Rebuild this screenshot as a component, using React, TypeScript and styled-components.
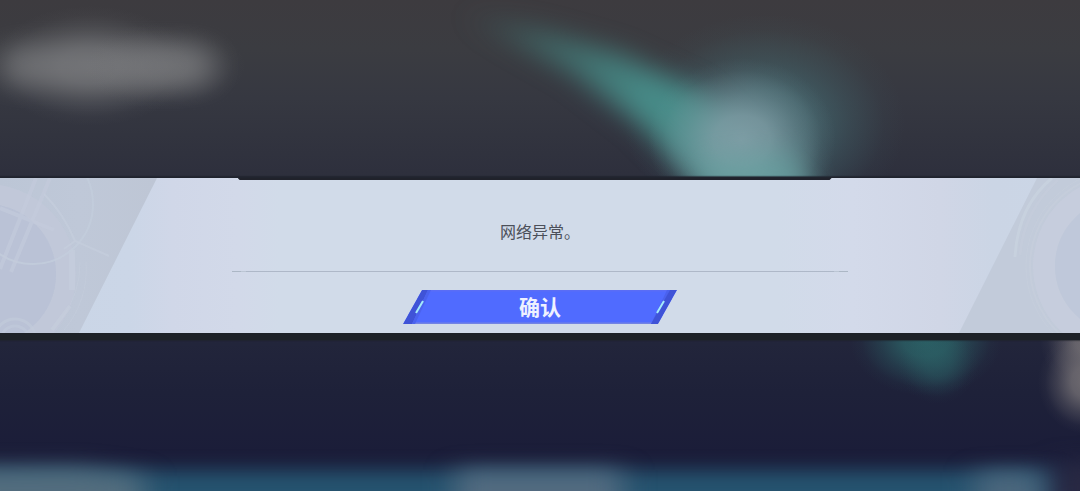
import React from "react";
import styled, { createGlobalStyle } from "styled-components";

const GlobalStyle = createGlobalStyle`
  *, *::before, *::after { box-sizing: border-box; }
  body {
    margin: 0;
    background: #1e2139;
    font-family: "Noto Sans CJK SC", "Noto Sans", sans-serif;
  }
`;

const Screen = styled.main`
  position: relative;
  min-height: 100vh;
  display: flex;
  flex-direction: column;
  justify-content: center;
  padding-top: 26px;
  overflow: hidden;
`;

const Scene = styled.svg`
  position: absolute;
  inset: 0;
  width: 100%;
  height: 100%;
`;

const Dialog = styled.section`
  position: relative;
  width: 100%;
  border-top: 1px solid #20242e;
  border-bottom: 7px solid #1d2127;
  box-shadow: 0 -1px 1px rgba(28, 32, 42, 0.6), 0 1px 1px rgba(29, 33, 39, 0.5);
  background: linear-gradient(
    90deg,
    #c9d5e6 0%,
    #cbd6e7 12%,
    #d0d7e8 16%,
    #d2d9e9 22%,
    #d1dbe9 26%,
    #d1dbe9 72%,
    #d3daea 79%,
    #d0d6e6 87%,
    #cbd5e5 92%,
    #cbd6e6 100%
  );
`;

const Emblem = styled.svg<{ $side: "left" | "right" }>`
  position: absolute;
  top: 0;
  bottom: 0;
  ${(p) => p.$side}: 0;
  height: 100%;
`;

const Notch = styled.div`
  position: relative;
  height: 2px;
  margin: 0 23% 0 22%;
  background: #20222b;
  clip-path: polygon(0 0, 100% 0, calc(100% - 2px) 100%, 2px 100%);
`;

const Content = styled.div`
  position: relative;
  display: flex;
  flex-direction: column;
  align-items: center;
  width: 57%;
  margin: 0 auto;
  padding: 39px 0 9px;
`;

const Message = styled.p`
  margin: 0;
  font-size: 16px;
  line-height: 24px;
  color: #4b4f59;
`;

const Divider = styled.hr`
  width: 100%;
  height: 1px;
  margin: 28px 0 18px;
  border: 0;
  background: linear-gradient(
    90deg,
    #acb7c5 0 9px,
    #bcc6d4 9px 14px,
    #aeb8c8 14px calc(100% - 14px),
    #bcc6d4 calc(100% - 14px) calc(100% - 9px),
    #acb7c5 calc(100% - 9px)
  );
`;

const ConfirmButton = styled.button`
  display: flex;
  align-items: center;
  justify-content: space-between;
  width: 274px;
  height: 34px;
  padding: 0;
  border: 0;
  cursor: pointer;
  color: #eef1ff;
  font-family: inherit;
  font-size: 21px;
  font-weight: 700;
  line-height: 32px;
  background: linear-gradient(#5a6df6 0 1px, #506bff 2px 32px, #7283e4 33px);
  clip-path: polygon(19px 0, 100% 0, calc(100% - 19px) 100%, 0 100%);
`;

const ButtonLabel = styled.span`
  height: 34px;
`;

const EdgeMark = styled.svg`
  display: block;
  width: 30px;
  height: 34px;
`;

function SoftFilter({ id, amount }: { id: string; amount: string }) {
  return (
    <filter id={id} x="-100%" y="-100%" width="300%" height="300%" colorInterpolationFilters="sRGB">
      <feGaussianBlur stdDeviation={amount} />
    </filter>
  );
}

function Glow({ id, color, strength }: { id: string; color: string; strength: number }) {
  return (
    <radialGradient id={id}>
      <stop offset="0" stopColor={color} stopOpacity={strength} />
      <stop offset="0.3" stopColor={color} stopOpacity={strength * 0.85} />
      <stop offset="0.6" stopColor={color} stopOpacity={strength * 0.4} />
      <stop offset="0.85" stopColor={color} stopOpacity={strength * 0.08} />
      <stop offset="1" stopColor={color} stopOpacity="0" />
    </radialGradient>
  );
}

function Backdrop() {
  return (
    <Scene viewBox="0 0 1080 491" preserveAspectRatio="none" aria-hidden="true">
      <defs>
        <linearGradient id="sky" x1="0" y1="0" x2="0" y2="1">
          <stop offset="0" stopColor="#3d3b3f" />
          <stop offset="0.1" stopColor="#3b3c41" />
          <stop offset="0.2" stopColor="#363841" />
          <stop offset="0.35" stopColor="#2e303d" />
          <stop offset="0.7" stopColor="#22253b" />
          <stop offset="0.8" stopColor="#1e2139" />
          <stop offset="0.92" stopColor="#1b1d39" />
          <stop offset="1" stopColor="#1b2140" />
        </linearGradient>
        <linearGradient id="beam" gradientUnits="userSpaceOnUse" x1="470" y1="15" x2="700" y2="140">
          <stop offset="0" stopColor="#458c87" stopOpacity="0.1" />
          <stop offset="0.35" stopColor="#458c87" stopOpacity="0.55" />
          <stop offset="0.75" stopColor="#488f8b" stopOpacity="0.95" />
        </linearGradient>
        <Glow id="halo" color="#47747a" strength={0.75} />
        <Glow id="core" color="#809ea6" strength={0.95} />
        <Glow id="smoke" color="#7a7b7e" strength={0.9} />
        <Glow id="teal" color="#2c6468" strength={0.9} />
        <Glow id="edge" color="#726e73" strength={0.95} />
        <SoftFilter id="softSmoke" amount="15 12" />
        <SoftFilter id="softBeam" amount="13" />
        <SoftFilter id="softBand" amount="14 9" />
        <SoftFilter id="softFlat" amount="15 11" />
      </defs>
      <rect width="1080" height="491" fill="url(#sky)" />

      <rect x="0" y="46" width="212" height="40" rx="16" fill="#747578" opacity="0.8" filter="url(#softSmoke)" />
      <ellipse cx="90" cy="66" rx="100" ry="60" fill="url(#smoke)" opacity="0.7" />
      <ellipse cx="165" cy="66" rx="80" ry="44" fill="url(#smoke)" opacity="0.5" />

      <ellipse cx="765" cy="124" rx="140" ry="110" fill="url(#halo)" />
      <path
        d="M460 14 L540 30 L620 54 L700 92 L810 200 L715 200 L640 124 L570 72Z"
        fill="url(#beam)"
        filter="url(#softBeam)"
      />
      <ellipse cx="742" cy="140" rx="94" ry="82" fill="url(#core)" />
      <path d="M700 160 L800 150 L820 204 L720 204Z" fill="#6ba1a2" opacity="0.7" filter="url(#softBeam)" />

      <ellipse cx="926" cy="340" rx="76" ry="56" fill="url(#teal)" />
      <ellipse cx="938" cy="364" rx="40" ry="40" fill="url(#teal)" opacity="0.5" />
      <ellipse cx="1090" cy="340" rx="50" ry="50" fill="url(#edge)" />
      <ellipse cx="1086" cy="382" rx="48" ry="52" fill="url(#edge)" />

      <g filter="url(#softBand)">
        <rect x="-60" y="471" width="1112" height="80" fill="#25536f" />
      </g>
      <g filter="url(#softFlat)">
        <path d="M-60 469 L80 468 L144 476 L144 560 L-60 560Z" fill="#536d7e" />
        <rect x="456" y="470" width="166" height="90" fill="#536b80" />
        <rect x="976" y="472" width="66" height="90" fill="#4c677d" />
        <rect x="1058" y="462" width="80" height="90" fill="#292943" />
      </g>
    </Scene>
  );
}

function LeftEmblem() {
  return (
    <Emblem $side="left" width="157" height="155" viewBox="0 0 157 155" aria-hidden="true">
      <defs>
        <clipPath id="leftSlant">
          <path d="M0 0H157L79 155H0Z" />
        </clipPath>
        <linearGradient id="leftTone" x1="0" y1="0" x2="1" y2="0">
          <stop offset="0" stopColor="#bcc6d6" />
          <stop offset="0.5" stopColor="#bfc8d8" />
          <stop offset="1" stopColor="#bec6d5" />
        </linearGradient>
      </defs>
      <g clipPath="url(#leftSlant)" fill="none">
        <rect width="157" height="155" fill="url(#leftTone)" />
        <circle cx="-14" cy="96" r="80" stroke="#c2c8da" strokeWidth="20" opacity="0.8" />
        <circle cx="-14" cy="96" r="70" fill="#b9c1d6" opacity="0.9" />
        <path d="M80 84 A93 93 0 0 1 62 140M86 84 A93 93 0 0 1 64 152" stroke="#c4cddc" strokeWidth="1" opacity="0.6" />
        <path d="M72 72V112" stroke="#c7cfde" strokeWidth="6" opacity="0.6" />
        <path d="M70 128L52 152" stroke="#c7cfde" strokeWidth="4" opacity="0.5" />
        <circle cx="33" cy="26" r="60" stroke="#c3cddc" strokeWidth="2" opacity="0.8" />
        <path d="M0 30L54 52M36 0L0 91M50 0L11 94" stroke="#c3cadc" strokeWidth="4" opacity="0.7" />
        <path d="M44 16Q64 36 75 63L109 78M75 63L64 71" stroke="#c4cddc" strokeWidth="2" opacity="0.8" />
        <circle cx="15" cy="162" r="21" stroke="#c2cada" strokeWidth="3" opacity="0.7" />
        <circle cx="15" cy="162" r="14" stroke="#c2cada" strokeWidth="3" opacity="0.6" />
      </g>
    </Emblem>
  );
}

function RightEmblem() {
  return (
    <Emblem $side="right" width="121" height="155" viewBox="0 0 121 155" aria-hidden="true">
      <defs>
        <clipPath id="rightSlant">
          <path d="M78 0H121V155H0Z" />
        </clipPath>
      </defs>
      <g clipPath="url(#rightSlant)" fill="none">
        <rect width="121" height="155" fill="#c2cbda" />
        <circle cx="164" cy="88" r="79" stroke="#c6cddd" strokeWidth="22" opacity="0.9" />
        <circle cx="164" cy="88" r="68" fill="#bfc8da" />
        <circle cx="164" cy="88" r="93" stroke="#c6cfdc" strokeWidth="2" opacity="0.6" />
        <circle cx="164" cy="88" r="97" stroke="#c6cfdc" strokeWidth="1" opacity="0.6" />
        <path d="M56 79Q59 28 93 0" stroke="#c8d2df" strokeWidth="3" opacity="0.8" />
        <path d="M61 77Q65 32 99 2" stroke="#c5cedc" strokeWidth="3" opacity="0.5" />
      </g>
    </Emblem>
  );
}

export default function App() {
  return (
    <>
      <GlobalStyle />
      <Screen>
        <Backdrop />
        <Dialog role="alertdialog" aria-describedby="message">
          <LeftEmblem />
          <RightEmblem />
          <Notch />
          <Content>
            <Message id="message">网络异常。</Message>
            <Divider />
            <ConfirmButton type="button">
              <EdgeMark viewBox="0 0 30 34" aria-hidden="true">
                <path d="M19 0H25L9 34H0Z" fill="#3f53d7" />
                <path d="M25 0H28L12 34H9Z" fill="#4b62ee" />
                <path d="M20 11L13 23" stroke="#a3eafa" strokeWidth="2" />
              </EdgeMark>
              <ButtonLabel>确认</ButtonLabel>
              <EdgeMark viewBox="0 0 30 34" aria-hidden="true">
                <path d="M20 0H23L7 34H4Z" fill="#4b62ee" />
                <path d="M23 0H30L11 34H4Z" fill="#3f53d7" />
                <path d="M17 11L10 23" stroke="#a3eafa" strokeWidth="2" />
              </EdgeMark>
            </ConfirmButton>
          </Content>
        </Dialog>
      </Screen>
    </>
  );
}
